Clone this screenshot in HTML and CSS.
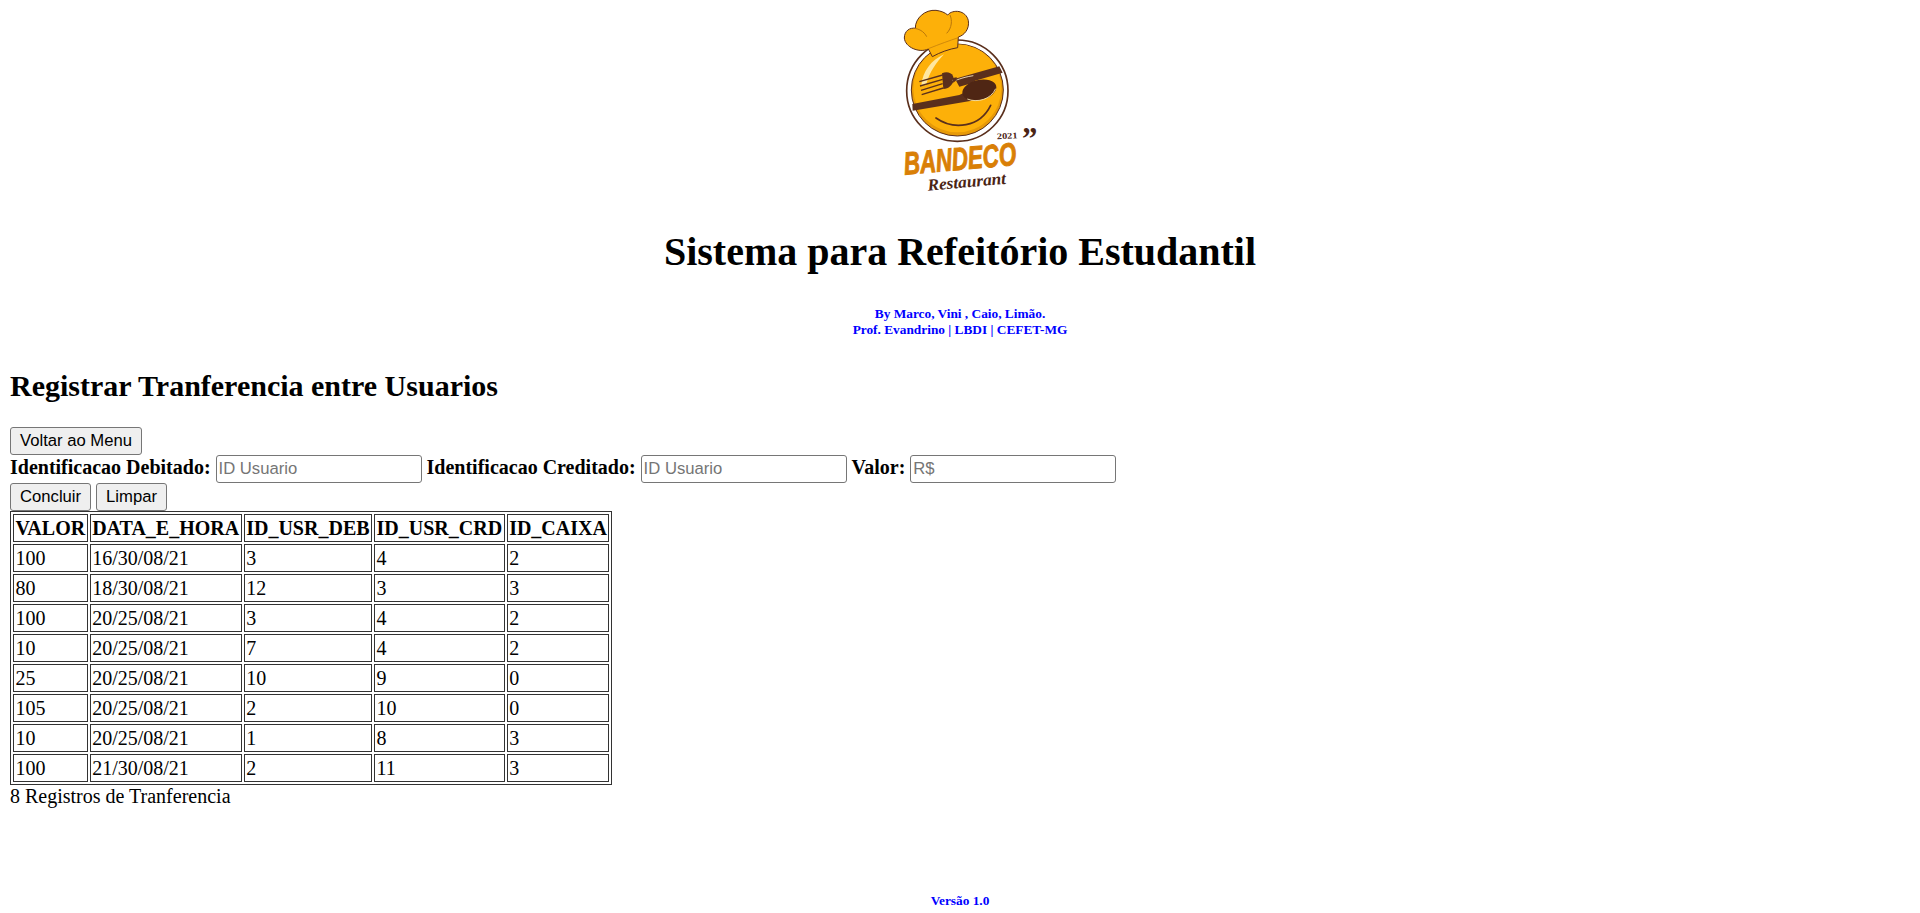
FILE: index.html
```html
<!DOCTYPE html>
<html lang="pt">
<head>
<meta charset="utf-8">
<title>Sistema para Refeitório Estudantil</title>
<link rel="stylesheet" href="styles.css">
</head>
<body>
<header class="site-header">
<svg class="logo" viewBox="0 24 660 606" role="img" aria-label="Bandeco Restaurant">
  <circle cx="292" cy="272" r="152" fill="#fff" stroke="#5a2f1c" stroke-width="5"/>
  <circle cx="292" cy="270" r="138" fill="#e79a08" stroke="#5a2f1c" stroke-width="3"/>
  <circle cx="292" cy="265" r="132" fill="#fdb009"/>
  <path d="M184 256C188 214 214 180 252 163C230 186 208 216 198 256Z" fill="#ffe7a0"/>
  <path d="M205 147C178 160 135 142 133 114C133 92 150 82 166 85C165 55 195 28 228 31C244 33 255 38 263 45C278 27 318 30 325 62C329 88 312 106 295 111L293 143C268 147 240 157 217 170Z" fill="#fdb009" stroke="#5a2f1c" stroke-width="3"/>
  <path d="M270 45C277 60 276 84 260 100M160 85C175 85 192 94 200 110" fill="none" stroke="#b9760a" stroke-width="3"/>
  <path d="M205 146C240 132 268 122 295 113" fill="none" stroke="#b9760a" stroke-width="2"/>
  <path d="M285 236L418 199L428 218L345 242L335 250L298 260Z" fill="#5a2f1c"/>
  <path d="M157 312L298 285L312 278L335 302L158 332Z" fill="#5a2f1c"/>
  <path d="M178 245L248 225M180 258L248 238M183 271L248 251M185 284L250 264" fill="none" stroke="#5a2f1c" stroke-width="4"/>
  <path d="M246 220C258 214 273 216 279 228L282 240C277 256 266 266 250 267Z" fill="#5a2f1c"/>
  <path d="M278 241C290 243 300 233 340 227" fill="none" stroke="#fff3cf" stroke-width="2.5"/>
  <path d="M278 234L290 232L290 240L280 248Z" fill="#5a2f1c"/>
  <ellipse cx="358" cy="270" rx="52" ry="30" transform="rotate(-14 358 270)" fill="#4f2614"/>
  <path d="M322 297C350 309 393 299 407 266" fill="none" stroke="#ffeebb" stroke-width="2.5"/>
  <path d="M228 354C282 392 360 382 392 316" fill="none" stroke="#5a2f1c" stroke-width="5" stroke-linecap="round"/>
  <text class="logo-year" x="411" y="418" textLength="62" lengthAdjust="spacingAndGlyphs" transform="rotate(-3 411 418)">2021</text>
  <text class="logo-quote" x="486" y="448">”</text>
  <text class="logo-brand" x="134" y="524" textLength="338" lengthAdjust="spacingAndGlyphs" transform="rotate(-5 134 524)">BANDECO</text>
  <text class="logo-sub" x="204" y="572" textLength="236" lengthAdjust="spacingAndGlyphs" transform="rotate(-5 204 572)">Restaurant</text>
</svg>
<h1 class="site-title">Sistema para Refeitório Estudantil</h1>
<p class="credits">By Marco, Vini , Caio, Limão.<br>Prof. Evandrino | LBDI | CEFET-MG</p>
</header>
<main>
<h2 class="page-title">Registrar Tranferencia entre Usuarios</h2>
<form class="transfer-form">
  <button type="button" class="btn">Voltar ao Menu</button><br>
  <label class="field-label" for="deb">Identificacao Debitado:</label>
  <input class="field" id="deb" type="text" placeholder="ID Usuario">
  <label class="field-label" for="crd">Identificacao Creditado:</label>
  <input class="field" id="crd" type="text" placeholder="ID Usuario">
  <label class="field-label" for="val">Valor:</label>
  <input class="field" id="val" type="text" placeholder="R$"><br>
  <button type="button" class="btn">Concluir</button>
  <button type="reset" class="btn">Limpar</button>
</form>
<table class="records">
  <thead>
    <tr><th>VALOR</th><th>DATA_E_HORA</th><th>ID_USR_DEB</th><th>ID_USR_CRD</th><th>ID_CAIXA</th></tr>
  </thead>
  <tbody>
    <tr><td>100</td><td>16/30/08/21</td><td>3</td><td>4</td><td>2</td></tr>
    <tr><td>80</td><td>18/30/08/21</td><td>12</td><td>3</td><td>3</td></tr>
    <tr><td>100</td><td>20/25/08/21</td><td>3</td><td>4</td><td>2</td></tr>
    <tr><td>10</td><td>20/25/08/21</td><td>7</td><td>4</td><td>2</td></tr>
    <tr><td>25</td><td>20/25/08/21</td><td>10</td><td>9</td><td>0</td></tr>
    <tr><td>105</td><td>20/25/08/21</td><td>2</td><td>10</td><td>0</td></tr>
    <tr><td>10</td><td>20/25/08/21</td><td>1</td><td>8</td><td>3</td></tr>
    <tr><td>100</td><td>21/30/08/21</td><td>2</td><td>11</td><td>3</td></tr>
  </tbody>
</table>
<p class="record-count">8 Registros de Tranferencia</p>
</main>
<footer class="site-footer">Versão 1.0</footer>
</body>
</html>
```
FILE: styles.css
```css
html, body {
  margin: 0;
  padding: 0;
}
body {
  padding: 8px 10px 0;
  background: #fff;
  color: #000;
  font-family: "Liberation Serif", "Times New Roman", serif;
  font-size: 20px;
}
.site-header {
  text-align: center;
}
.logo {
  display: block;
  width: 220px;
  height: 202px;
  margin: 0 auto;
  position: relative;
  left: 10px;
}
.logo-year {
  font: bold 26px "Liberation Serif", serif;
  fill: #4a2415;
}
.logo-quote {
  font: bold 92px "Liberation Serif", serif;
  fill: #4a2415;
}
.logo-brand {
  font: italic bold 96px "Liberation Sans", sans-serif;
  fill: #d97f06;
  stroke: #d97f06;
  stroke-width: 3px;
}
.logo-sub {
  font: italic bold 50px "Liberation Serif", serif;
  fill: #4a2415;
}
.site-title {
  margin: 19px 0 31px;
  font-size: 40px;
  line-height: 46px;
}
.credits {
  margin: 0;
  color: #00f;
  font-size: 13.33px;
  font-weight: bold;
  line-height: 16px;
}
.page-title {
  margin: 31px 0 24px;
  font-size: 30px;
  line-height: 34px;
}
.transfer-form {
  margin: 0;
}
.btn {
  height: 28px;
  padding: 1px 9px;
  border: 1px solid #767676;
  border-radius: 3px;
  background: #efefef;
  color: #000;
  font-family: "Liberation Sans", Arial, sans-serif;
  font-size: 16.67px;
}
.field-label {
  font-weight: bold;
}
.field {
  box-sizing: border-box;
  width: 206px;
  height: 28px;
  padding: 1px 2px;
  border: 1px solid #767676;
  border-radius: 3px;
  font-family: "Liberation Sans", Arial, sans-serif;
  font-size: 16.67px;
}
.field::placeholder {
  color: #757575;
}
.records {
  border: 1px solid #333;
  border-spacing: 2.5px;
}
.records th,
.records td {
  padding: 1.5px;
  border: 1px solid #333;
  text-align: left;
}
.records th {
  text-align: center;
}
.record-count {
  margin: 0;
}
.site-footer {
  margin-top: 85px;
  color: #00f;
  font-size: 13.33px;
  font-weight: bold;
  line-height: 16px;
  text-align: center;
}
```
